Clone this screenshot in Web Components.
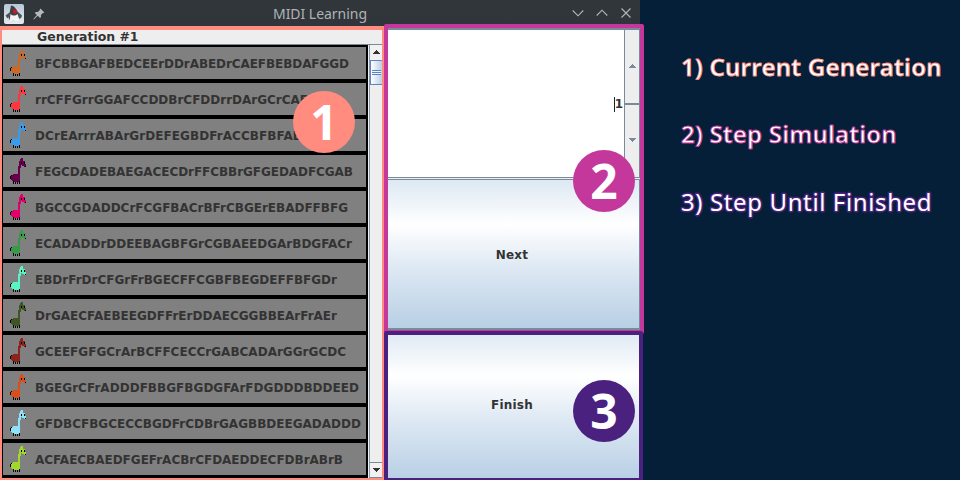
<!DOCTYPE html>
<html lang="en">
<head>
<meta charset="utf-8">
<title>MIDI Learning</title>
<style>
html,body{margin:0;background:#041f37}
body{width:960px;height:480px;overflow:hidden}
</style>
</head>
<body>
<midi-page></midi-page>
<script>
const define = (name, render) => customElements.define(name, class extends HTMLElement {
  connectedCallback() {
    if (this.shadowRoot) return;
    this.attachShadow({ mode: 'open' }).innerHTML = render(this);
  }
});

define('title-bar', () => `<style>
:host{display:grid;grid-template-columns:1fr auto 1fr;align-items:center;height:26px;background:linear-gradient(#31363b,#31363b 60%,#2f353a);color:#b3b6b8}
.l{display:flex;align-items:center;gap:9px;padding-left:4px;padding-top:1px}
.r{display:flex;justify-content:flex-end;gap:12px;padding-right:8px}
svg{display:block;overflow:visible}
text{font:14px "Noto Sans",sans-serif;fill:#b0b3b5}
</style>
<div class="l">
<svg width="20" height="20" viewBox="0 0 20 20"><defs><linearGradient id="g" x2="0" y2="1"><stop stop-color="#b9c6d4"/><stop offset="1" stop-color="#e6ebf0"/></linearGradient></defs><rect width="20" height="20" rx="2" fill="url(#g)"/><path d="M7 1.500c3 0 5 3 7 7 1 3 3 5 1 7l-3 0-3 1-4-1c-1-4 1-6 1-9z" fill="#3c4145"/><path d="M1.500 11.500l4-3 2 1-4 5zM14 8l4 3.500-1 3-3-2z" fill="#4a525a"/><path d="M6.500 10c2 2 5 2 7 0l2 6-3 1.500-3-1-4 1z" fill="#f4f4f4"/><circle cx="11" cy="7.500" r="2.200" fill="#c91a2a"/></svg>
<svg width="12" height="12" viewBox="0 0 12 12"><path d="M7.400.5l4 4-1 .6-.5-.1-2 2 .1 2-1 1-2.200-2.200L.8 11.600.3 11l3.600-4L1.800 4.900l1-1 2.100.1 2-2-.1-.6z" fill="#b6b9bb"/></svg>
</div><svg width="94" height="26"><text y="19" textLength="94">MIDI Learning</text></svg>
<div class="r"><svg width="12" height="12" fill="none" stroke="#b3b6b8" stroke-width="1.100"><path d="M.7 3.500L6 8.800l5.300-5.300"/></svg><svg width="12" height="12" fill="none" stroke="#b3b6b8" stroke-width="1.100"><path d="M.7 8.500L6 3.200l5.300 5.300"/></svg><svg width="12" height="12" fill="none" stroke="#b3b6b8" stroke-width="1.100"><path d="M1.500 1.500l9 9M10.500 1.500l-9 9"/></svg></div>`);

define('giraffe-icon', el => `<style>:host{display:block;width:16px;height:26px}svg{display:block}</style>
<svg width="16" height="26" shape-rendering="crispEdges"><path fill="${el.getAttribute('color')}" d="M11 0h2v3h2v3h1v2h-1v1h-1v-1h-2v-1h-1v3h-1v13h-1v1h-6v-1h-1v-1h-1v-4h1v-1h1v-1h5v-8h1v-5h1z"/><path fill="#000" d="M11 4h1v2h-1zM14 4h1v2h-1zM15 8h1v1h-1zM1 17h1v1h-1zM0 18h1v3h-1zM3 23h1v3h-1zM5 24h1v2h-1zM7 24h1v2h-1zM9 23h1v3h-1z"/></svg>`);

define('gene-row', el => `<style>
:host{display:flex;align-items:center;gap:9px;height:32px;background:#808080;padding-left:7px;overflow:hidden;white-space:nowrap}
svg{display:block;overflow:visible}text{font:bold 12px "DejaVu Sans",sans-serif}
</style><giraffe-icon color="${el.getAttribute('color')}"></giraffe-icon>
<svg width="${el.getAttribute('w')}" height="16"><text y="13" fill="#333" textLength="${el.getAttribute('w')}" lengthAdjust="spacing">${el.getAttribute('gene')}</text></svg>`);

const genes = [
 ['#c8692a','BFCBBGAFBEDCEErDDrABEDrCAEFBEBDAFGGD',314],
 ['#ff3640','rrCFFGrrGGAFCCDDBrCFDDrrDArGCrCAF',273],
 ['#3a9bea','DCrEArrrABArGrDEFEGBDFrACCBFBFAE',266],
 ['#66004d','FEGCDADEBAEGACECDrFFCBBrGFGEDADFCGAB',318],
 ['#e0006c','BGCCGDADDCrFCGFBACrBFrCBGErEBADFFBFG',313],
 ['#389a48','ECADADDrDDEEBAGBFGrCGBAEEDGArBDGFACr',317],
 ['#58f5c4','EBDrFrDrCFGrFrBGECFFCGBFBEGDEFFBFGDr',302],
 ['#3f5524','DrGAECFAEBEEGDFFrErDDAECGGBBEArFrAEr',302],
 ['#8a241c','GCEEFGFGCrArBCFFCECCrGABCADArGGrGCDC',311],
 ['#d84f1c','BGEGrCFrADDDFBBGFBGDGFArFDGDDDBDDEED',324],
 ['#8ce2f8','GFDBCFBGCECCBGDFrCDBrGAGBBDEEGADADDD',326],
 ['#a0d82c','ACFAECBAEDFGEFrACBrCFDAEDDECFDBrABrB',308]];

define('scroll-bar', () => `<style>
:host{display:flex;flex-direction:column;width:13px;background:#eee;border-left:1px solid #8a9bae;box-sizing:border-box;overflow:hidden}
.b{height:15px;box-sizing:border-box;padding-bottom:2px;background:#f1f1f1;display:grid;place-items:center}
.b svg{display:block}
.thumb{height:23px;border:1px solid #6382bf;border-right:0;background:linear-gradient(90deg,#fff,#b8cfe5);display:grid;place-items:center}
.grip{width:9px;height:5px;background:linear-gradient(#5b80c5 0 1px,#eef4fb 1px 2px,#5b80c5 2px 3px,#eef4fb 3px 4px,#5b80c5 4px)}
.track{flex:1}.end{border-top:1px solid #7a8a99;border-bottom:1px solid #7a8a99;height:16px;padding-bottom:0}
</style><div class="b"><svg width="8" height="4" shape-rendering="crispEdges"><path d="M4 0l4 4H0z" fill="#333"/></svg></div><div class="thumb"><div class="grip"></div></div><div class="track"></div><div class="b end"><svg width="8" height="4" shape-rendering="crispEdges"><path d="M0 0h8L4 4z" fill="#333"/></svg></div>`);

define('generation-list', () => `<style>
:host{display:flex;flex-direction:column;width:384px;box-sizing:border-box;border:2px solid #ff8c7f;border-top-width:4px;background:#eee}
.h{height:14px;border-bottom:1px solid #7a8a99;padding-left:35px}
.h svg{display:block;overflow:visible}
.h text{font:bold 12px "DejaVu Sans",sans-serif;fill:#333}
.m{flex:1;display:flex;min-height:0}
.rows{width:366px;box-sizing:border-box;background:#000;padding:2px 2px 3px 1px;display:flex;flex-direction:column;gap:4px}
scroll-bar{margin-left:1px}
</style><div class="h"><svg width="110" height="14"><text y="11" textLength="101.500" lengthAdjust="spacingAndGlyphs">Generation #1</text></svg></div>
<div class="m"><div class="rows">${genes.map(g=>`<gene-row color="${g[0]}" gene="${g[1]}" w="${g[2]}"></gene-row>`).join('')}</div><scroll-bar></scroll-bar></div>`);

define('number-spinner', () => `<style>
:host{display:flex;height:150px;box-sizing:border-box;border-top:2px solid #7a8a99;border-bottom:1px solid #7a8a99;background:#fff}
.v{flex:1;display:flex;align-items:center;justify-content:flex-end;color:#333;font:bold 12px "DejaVu Sans",sans-serif;padding:2px 2px 0 0}
.v span{border-left:1px solid #222;line-height:15px;height:15px;letter-spacing:-1px}
.a{width:16px;box-sizing:border-box;border-left:1px solid #7a8a99;border-right:1px solid #7a8a99;background:#eee;display:flex;flex-direction:column}
.a div{box-sizing:border-box;height:73px;padding-bottom:2px;display:grid;place-items:center}.a div+div{border-top:2px solid #7a8a99;height:74px}
svg{display:block}
</style><div class="v"><span>1</span></div><div class="a"><div><svg width="7" height="4" shape-rendering="crispEdges"><path d="M3 0h1v1h1v1h1v1h1v1H0V3h1V2h1V1h1z" fill="#7a8a99"/></svg></div><div><svg width="7" height="4" shape-rendering="crispEdges"><path d="M0 0h7v1H6v1H5v1H4v1H3V3H2V2H1V1H0z" fill="#7a8a99"/></svg></div></div>`);

define('metal-button', () => `<style>
:host{display:grid;place-items:center;box-sizing:border-box;background:linear-gradient(#dde8f3 0,#fff 30%,#dde8f3 60%,#b8cfe5 100%);color:#333;font:bold 12px "DejaVu Sans",sans-serif;letter-spacing:.2px}
</style><span><slot></slot></span>`);

define('control-panel', () => `<style>
:host{display:flex;flex-direction:column;width:256px;box-sizing:border-box;padding:2px 0 0 4px;background:#eee}
.n{margin-top:1px;height:151px;border-top:1px solid #7a8a99;border-bottom:2px solid #7a8a99;border-right:1px solid #7a8a99;padding:1px 3px 0 0}
.f{margin-top:1px;height:149px;border-right:1px solid #b8cfe5;padding:0 3px 2px 0}
</style><number-spinner></number-spinner><metal-button class="n">Next</metal-button><metal-button class="f">Finish</metal-button>`);

define('app-window', () => `<style>
:host{display:flex;flex-direction:column;width:640px;height:480px;overflow:hidden}
.c{display:flex;height:454px}
</style><title-bar></title-bar><div class="c"><generation-list></generation-list><control-panel></control-panel></div>`);

define('legend-item', el => `<style>
:host{display:block;height:67.300px}
svg{display:block;overflow:visible}
text{font:${el.getAttribute('weight')} 24px "Noto Sans",sans-serif;stroke:${el.getAttribute('color')};stroke-width:${el.getAttribute('sw')}px;stroke-linejoin:round;fill:#fff;paint-order:${el.getAttribute('order') || 'normal'}}
</style><svg width="262" height="34"><text y="25" textLength="${el.getAttribute('w')}">${el.textContent}</text></svg>`);

define('legend-panel', () => `<style>
:host{display:flex;flex-direction:column;width:320px;box-sizing:border-box;padding:51px 0 0 41px;background:#041f37}
</style><legend-item color="#ff8c7f" weight="600" w="260.500" sw=".8">1) Current Generation</legend-item><legend-item color="#c4389b" weight="600" w="215.500" sw=".9">2) Step Simulation</legend-item><legend-item color="#4b217f" weight="400" w="250.500" sw="3" order="stroke">3) Step Until Finished</legend-item>`);

define('number-badge', () => `<style>
:host{position:absolute;display:grid;place-items:center;width:62px;height:62px;border-radius:50%;color:#fff;font:bold 48px/62px "Noto Sans",sans-serif}
</style><slot></slot>`);

define('midi-page', () => `<style>
:host{position:relative;display:flex;width:960px;height:480px;overflow:hidden}
.frame{position:absolute;box-sizing:border-box;pointer-events:none}
.p{left:384px;top:24px;width:260px;height:310px;border:4px solid #c4389b;border-radius:2px}
.q{left:384px;top:331px;width:259px;height:149px;border:4px solid #4b217f;border-bottom-width:2px;border-radius:2px 2px 0 0}
</style><app-window></app-window><legend-panel></legend-panel>
<div class="frame p"></div><div class="frame q"></div>
<number-badge style="left:293px;top:91px;background:#ff8c7f">1</number-badge>
<number-badge style="left:573px;top:150px;background:#c4389b">2</number-badge>
<number-badge style="left:573px;top:380px;background:#4b217f">3</number-badge>`);
</script>
</body>
</html>
